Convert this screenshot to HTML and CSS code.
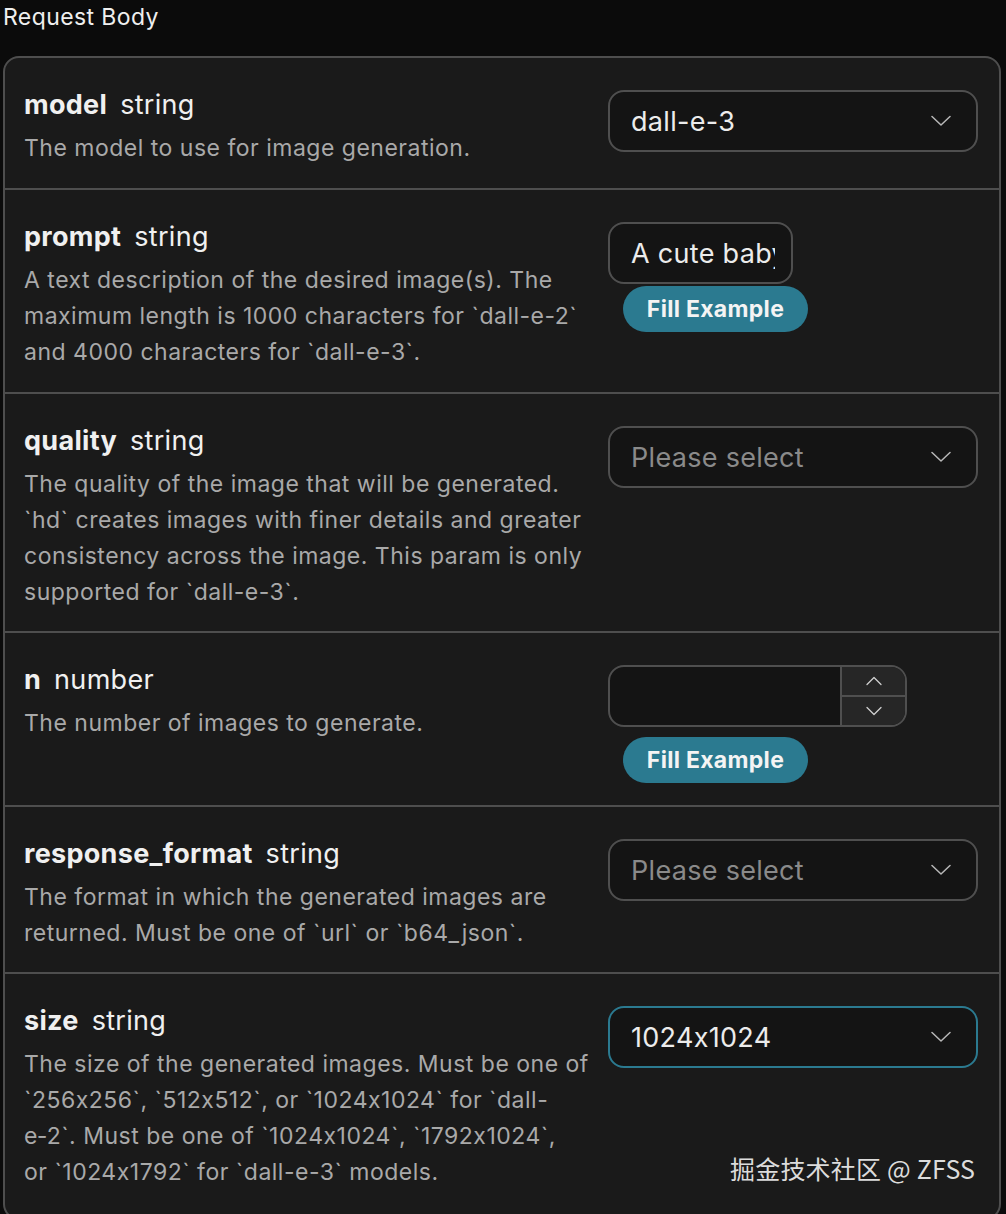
FILE: index.html
```html
<!DOCTYPE html>
<html lang="en">
<head>
<meta charset="utf-8">
<title>Request Body</title>
<link rel="stylesheet" href="styles.css">
</head>
<body>
<div class="heading">Request Body</div>
<div class="card">
  <div class="row">
    <div class="info">
      <div class="title"><span class="name">model</span><span class="type">string</span></div>
      <div class="desc">The model to use for image generation.</div>
    </div>
    <div class="control">
      <div class="select"><span class="value">dall-e-3</span><svg class="chev" viewBox="0 0 20 12" width="20" height="12"><path d="M1 1.5 L10 10 L19 1.5" fill="none" stroke="currentColor" stroke-width="1.5" stroke-linecap="round" stroke-linejoin="round"/></svg></div>
    </div>
  </div>
  <div class="row">
    <div class="info">
      <div class="title"><span class="name">prompt</span><span class="type">string</span></div>
      <div class="desc">A text description of the desired image(s). The maximum length is 1000 characters for `dall-e-2` and 4000 characters for `dall-e-3`.</div>
    </div>
    <div class="control">
      <input class="text-input" type="text" value="A cute baby sea otter">
      <button class="fill fill-tight">Fill Example</button>
    </div>
  </div>
  <div class="row">
    <div class="info">
      <div class="title"><span class="name">quality</span><span class="type">string</span></div>
      <div class="desc">The quality of the image that will be generated. `hd` creates images with finer details and greater consistency across the image. This param is only supported for `dall-e-3`.</div>
    </div>
    <div class="control">
      <div class="select"><span class="placeholder">Please select</span><svg class="chev" viewBox="0 0 20 12" width="20" height="12"><path d="M1 1.5 L10 10 L19 1.5" fill="none" stroke="currentColor" stroke-width="1.5" stroke-linecap="round" stroke-linejoin="round"/></svg></div>
    </div>
  </div>
  <div class="row">
    <div class="info">
      <div class="title"><span class="name">n</span><span class="type">number</span></div>
      <div class="desc">The number of images to generate.</div>
    </div>
    <div class="control">
      <div class="number">
        <div class="num-field"></div>
        <div class="spin">
          <div class="spin-btn"><svg viewBox="0 0 16 10" width="16" height="10"><path d="M1 8.5 L8 1.5 L15 8.5" fill="none" stroke="currentColor" stroke-width="1.3" stroke-linecap="round" stroke-linejoin="round"/></svg></div>
          <div class="spin-btn"><svg viewBox="0 0 16 10" width="16" height="10"><path d="M1 1.5 L8 8.5 L15 1.5" fill="none" stroke="currentColor" stroke-width="1.3" stroke-linecap="round" stroke-linejoin="round"/></svg></div>
        </div>
      </div>
      <button class="fill fill-loose">Fill Example</button>
    </div>
  </div>
  <div class="row">
    <div class="info">
      <div class="title"><span class="name">response_format</span><span class="type">string</span></div>
      <div class="desc">The format in which the generated images are returned. Must be one of `url` or `b64_json`.</div>
    </div>
    <div class="control">
      <div class="select"><span class="placeholder">Please select</span><svg class="chev" viewBox="0 0 20 12" width="20" height="12"><path d="M1 1.5 L10 10 L19 1.5" fill="none" stroke="currentColor" stroke-width="1.5" stroke-linecap="round" stroke-linejoin="round"/></svg></div>
    </div>
  </div>
  <div class="row">
    <div class="info">
      <div class="title"><span class="name">size</span><span class="type">string</span></div>
      <div class="desc">The size of the generated images. Must be one of `256x256`, `512x512`, or `1024x1024` for `dall-e&#8209;2`. Must be one of `1024x1024`, `1792x1024`,<br>or `1024x1792` for `dall-e-3` models.</div>
    </div>
    <div class="control">
      <div class="select focused"><span class="value">1024x1024</span><svg class="chev" viewBox="0 0 20 12" width="20" height="12"><path d="M1 1.5 L10 10 L19 1.5" fill="none" stroke="currentColor" stroke-width="1.5" stroke-linecap="round" stroke-linejoin="round"/></svg></div>
    </div>
  </div>
</div>
<div class="watermark">掘金技术社区 @ ZFSS</div>
</body>
</html>
```
FILE: styles.css
```css
html, body {
  margin: 0;
  padding: 0;
  background: #0b0b0b;
}
body {
  font-family: Inter, "Noto Sans", "Liberation Sans", sans-serif;
  font-feature-settings: "calt" 0;
  color: #e6e6e6;
  padding: 0 5px 0 3px;
  position: relative;
  min-height: 1214px;
}
.heading {
  font-size: 23px;
  letter-spacing: 0.4px;
  line-height: 34px;
  color: #efefef;
  margin-bottom: 22px;
}
.card {
  background: #1a1a1a;
  border: 2px solid #4e4e4e;
  border-radius: 16px;
}
.row {
  display: grid;
  grid-template-columns: 566px 370px;
  column-gap: 18px;
  padding: 32px 20px 22px 19px;
  border-top: 2px solid #4e4e4e;
}
.row:first-child {
  border-top: none;
}
.row:nth-child(3),
.row:nth-child(5) {
  padding-bottom: 21px;
}
.row:last-child {
  padding-bottom: 28px;
}
.title {
  display: flex;
  align-items: baseline;
  gap: 13px;
  font-size: 27px;
  letter-spacing: 0.3px;
  line-height: 30px;
  color: #f0f0f0;
}
.name {
  font-weight: 700;
}
.type {
  font-weight: 400;
}
.desc {
  margin-top: 10px;
  font-size: 23px;
  letter-spacing: 0.5px;
  line-height: 36px;
  color: #a9a9a9;
}
.control {
  display: flex;
  flex-direction: column;
  align-items: flex-start;
}
.select {
  box-sizing: border-box;
  width: 370px;
  height: 62px;
  border: 2px solid #4f4f4f;
  border-radius: 16px;
  background: #141414;
  display: flex;
  align-items: center;
  justify-content: space-between;
  padding: 0 25px 0 21px;
  font-size: 27px;
  letter-spacing: 0.3px;
}
.select.focused {
  border-color: #2b7a90;
}
.value {
  color: #ececec;
}
.placeholder {
  color: #8a8a8a;
}
.chev {
  color: #b8b8b8;
}
.text-input {
  box-sizing: border-box;
  width: 185px;
  height: 62px;
  border: 2px solid #4f4f4f;
  border-radius: 16px;
  background: #141414;
  color: #ececec;
  font-family: Inter, "Noto Sans", "Liberation Sans", sans-serif;
  font-size: 27px;
  letter-spacing: 0.3px;
  padding: 0 16px 0 21px;
  outline: none;
}
.fill {
  margin-left: 15px;
  width: 185px;
  height: 46px;
  border: none;
  border-radius: 24px;
  background: #2b7a90;
  color: #f4f4f4;
  font-family: Inter, "Noto Sans", "Liberation Sans", sans-serif;
  font-size: 23px;
  letter-spacing: 0.3px;
  font-weight: 700;
  padding: 0;
}
.fill-tight {
  margin-top: 2px;
}
.fill-loose {
  margin-top: 10px;
}
.number {
  box-sizing: border-box;
  width: 299px;
  height: 62px;
  border: 2px solid #4f4f4f;
  border-radius: 16px;
  background: #141414;
  display: flex;
  overflow: hidden;
}
.num-field {
  flex: 1;
}
.spin {
  width: 63px;
  display: flex;
  flex-direction: column;
  border-left: 2px solid #4f4f4f;
  background: #262626;
}
.spin-btn {
  flex: 1;
  display: flex;
  align-items: center;
  justify-content: center;
  color: #cfcfcf;
}
.spin-btn + .spin-btn {
  border-top: 2px solid #4f4f4f;
}
.watermark {
  position: absolute;
  left: 730px;
  top: 1151px;
  font-family: "Noto Sans CJK SC", "Noto Sans", sans-serif;
  font-size: 25px;
  letter-spacing: 0.2px;
  line-height: 34px;
  color: #dcdcdc;
  white-space: nowrap;
}
```
